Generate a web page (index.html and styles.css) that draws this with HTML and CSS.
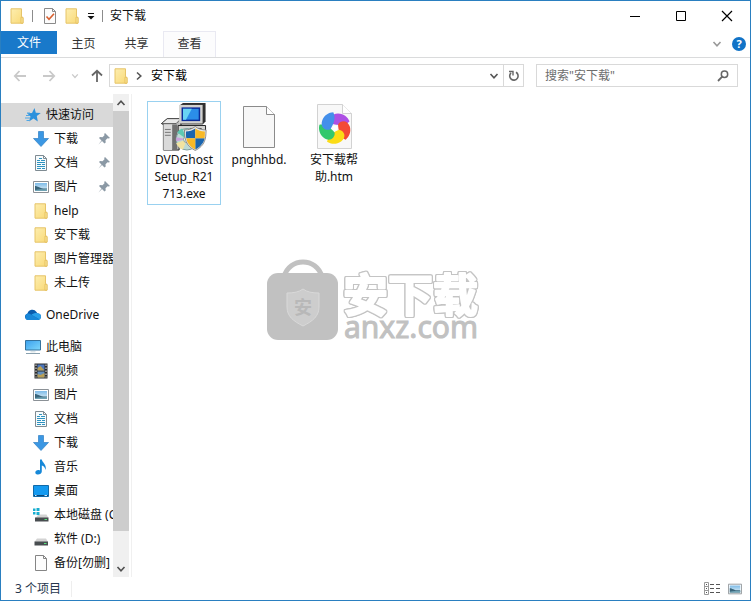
FILE: index.html
```html
<!DOCTYPE html>
<html lang="zh-CN">
<head>
<meta charset="utf-8">
<title>安下载</title>
<link rel="stylesheet" href="styles.css">
</head>
<body>
<svg class="sprite" width="0" height="0" aria-hidden="true">
  <defs>
    <linearGradient id="gFolder" x1="0" y1="0" x2="1" y2="1"><stop offset="0" stop-color="#fdeeb0"/><stop offset="1" stop-color="#f9d976"/></linearGradient>
    <linearGradient id="gScreen" x1="0" y1="0" x2="1" y2="1"><stop offset="0" stop-color="#3aa0ee"/><stop offset="1" stop-color="#7fd8fb"/></linearGradient>
    <linearGradient id="gPhoto" x1="0" y1="0" x2="0" y2="1"><stop offset="0" stop-color="#7dbbe8"/><stop offset="1" stop-color="#e6f2f6"/></linearGradient>
  </defs>
  <symbol id="folder" viewBox="0 0 16 16"><path d="M2 .8h10.500v8l1.500 1v5.400H2z" fill="url(#gFolder)" stroke="#e6c469"/><path d="M12 9.200h2v6h-2z" fill="#fbe69b" stroke="#e3bb55" stroke-width=".8"/></symbol>
  <symbol id="doc" viewBox="0 0 16 16"><path d="M2.500.5h8l3 3v12h-11z" fill="#f6fbfd" stroke="#7f8b92"/><path d="M10.500.5v3h3" fill="none" stroke="#7f8b92"/><path d="M6 3.500h3M4 5.500h3M8 5.500h4M4 7.500h8M4 9.500h4M9 9.500h3M4 11.500h8M4 13.500h4M9 13.500h3" stroke="#2f93c0" stroke-width="1.200"/></symbol>
  <symbol id="photo" viewBox="0 0 16 16"><path d="M.5 2.500h15v11H.5z" fill="#fff" stroke="#8b9196"/><path d="M2 4h12v8H2z" fill="url(#gPhoto)"/><path d="M2 7c3 0 5 3 12 2.500V12H2z" fill="#39657b"/><path d="M2 11c4-1 8-.5 12-1v2H2z" fill="#70a3b4"/></symbol>
  <symbol id="down" viewBox="0 0 16 16"><path d="M5.500.5h5v7h5L8 15.500.5 7.500h5z" fill="#3b97e3" stroke="#2f7fc4" stroke-width=".7"/></symbol>
  <symbol id="star" viewBox="0 0 16 16"><path d="M9.500 1l1.300 4.700 5 .2-4 3.100 1 5.500-4.300-3L4 14.500l1.500-5L2 6.200l5-.3z" fill="#2c91dc"/><path d="M1 8.500h4M0 11h5M1.500 13.500h3M2 6h3" stroke="#4fa6e4"/></symbol>
  <symbol id="pin" viewBox="0 0 12 12"><path d="M7 0l5 5-1.500.5-1-.2-2 2 .2 2.200L6.500 10.500 4 8 .5 11.500 3.500 7.500 1 5l1-1 2.500.3 2-2L6.200 1z" fill="#8b99a5"/></symbol>
  <symbol id="cloud" viewBox="0 0 16 16"><path d="M3 13a3.300 3.300 0 0 1-.5-6.500A5 5 0 0 1 11.500 5l1 1.500a3 3 0 0 1 .5 6.500z" fill="#0a5cae"/><path d="M3 13a3.300 3.300 0 0 1 .2-6.500c1 0 1.800.4 2.800 1l8.500 5c-.5.400-.9.500-1.500.5z" fill="#1887d8"/><path d="M6.500 7.800C9 5.500 15.500 5 16 9.500c0 1-.5 2-1.300 2.900z" fill="#2aa0ea"/></symbol>
  <symbol id="pc" viewBox="0 0 16 16"><path d="M.5 1.500h15v9.500H.5z" fill="url(#gScreen)" stroke="#35729d"/><path d="M5.500 12h5v1.500h-5z" fill="#dbe4e8"/><path d="M1 14.500h14" stroke="#89a0ae"/></symbol>
  <symbol id="video" viewBox="0 0 16 16"><path d="M1.500.5h13v15h-13z" fill="#2c2c2c"/><path d="M4.500 1.500h7v6h-7z" fill="#4b76bd"/><path d="M4.500 8.500h7v6h-7z" fill="#648fbd"/><path d="M4.500 5l3-2 4 4.500h-7zM4.500 11l3 1 4-2v4.500h-7z" fill="#b99f55"/><path d="M3 1.500v13M13 1.500v13" stroke="#eee" stroke-dasharray="1.500 1.500"/></symbol>
  <symbol id="music" viewBox="0 0 16 16"><path d="M7 .5h1.800C9.300 4 14 5 12.500 11 12 8.500 10.800 7 8.800 6.500v6c0 3.700-6.500 4-6.500 1 0-2 2.500-3 4.700-2z" fill="#1688d8"/></symbol>
  <symbol id="desktop" viewBox="0 0 16 16"><path d="M.5 2.500h15v11H.5z" fill="#149af0" stroke="#116aa8"/><path d="M1 12.500h14" stroke="#0a4778"/><path d="M2 12.500h1.500M11.500 12.500H14" stroke="#d0ecff"/></symbol>
  <symbol id="disk" viewBox="0 0 16 16"><path d="M4 7.500h9l2 3.500H1.500z" fill="#d3d3d3"/><path d="M1.500 10.500h13.500v4H1.500z" fill="#484d50"/><path d="M11 12.500h2.500" stroke="#57e47c"/></symbol>
  <symbol id="sysdisk" viewBox="0 0 16 16"><path d="M5.500 7.500h8l2 3.500H2.500z" fill="#d3d3d3"/><path d="M2 10.500h13.500v4H2z" fill="#484d50"/><path d="M11.500 12.500H14" stroke="#57e47c"/><path d="M0 1.500h2.500V4H0zM3.500 1H6.500v3h-3zM0 5h2.500v2.500H0zM3.500 5h3v3h-3z" fill="#19aed0"/></symbol>
  <symbol id="blank" viewBox="0 0 16 16"><path d="M2.500.5h8l3 3v12h-11z" fill="#fdfdfd" stroke="#858585"/><path d="M10.500.5v3h3" fill="none" stroke="#858585"/></symbol>
  <symbol id="check" viewBox="0 0 16 16"><path d="M2.500.5h8l3 3v12h-11z" fill="#fcfcfc" stroke="#8a8a8a"/><path d="M10.500.5v3h3" fill="none" stroke="#8a8a8a"/><path d="M4.500 8.500l2.500 2.700 5-5.500" fill="none" stroke="#d86030" stroke-width="1.600"/></symbol>
  <symbol id="chev" viewBox="0 0 10 10"><path d="M1.500 3L5 6.800 8.500 3" fill="none" stroke="currentColor" stroke-width="1.600"/></symbol>
  <symbol id="arrow" viewBox="0 0 14 14"><path d="M13 7H2M6.500 2L1.800 7l4.700 5" fill="none" stroke="currentColor" stroke-width="1.800"/></symbol>
  <symbol id="petal" viewBox="-20 -20 40 40"><path d="M-2.500-4C-6-8-4-14.500 3-14.500c6 0 10 4 11.500 8C10-2 3-2.500-2.500-4z" fill="currentColor"/></symbol>
</svg>

<div class="window">
  <header class="titlebar">
    <svg class="ic"><use href="#folder"/></svg>
    <span class="sep"></span>
    <button class="plain" aria-label="属性"><svg class="ic"><use href="#check"/></svg></button>
    <button class="plain" aria-label="新建文件夹"><svg class="ic"><use href="#folder"/></svg></button>
    <button class="plain qat" aria-label="自定义快速访问工具栏"><svg width="8" height="8" viewBox="0 0 8 8"><path d="M1 1.500h6" stroke="#111"/><path d="M.5 4h7L4 7.500z" fill="#111"/></svg></button>
    <span class="sep"></span>
    <h1>安下载</h1>
    <div class="controls">
      <button class="plain" aria-label="最小化"><svg width="12" height="12" viewBox="0 0 12 12"><path d="M1 6.500h10" stroke="#000"/></svg></button>
      <button class="plain" aria-label="最大化"><svg width="12" height="12" viewBox="0 0 12 12"><path d="M1.500 1.500h9v9h-9z" fill="none" stroke="#000"/></svg></button>
      <button class="plain" aria-label="关闭"><svg width="12" height="12" viewBox="0 0 12 12"><path d="M1 1l10 10M11 1L1 11" stroke="#000" stroke-width="1.200"/></svg></button>
    </div>
  </header>

  <nav class="tabs">
    <button class="tab file">文件</button>
    <button class="tab">主页</button>
    <button class="tab">共享</button>
    <button class="tab active">查看</button>
    <span class="fill"></span>
    <button class="plain expand" aria-label="展开功能区"><svg width="10" height="10"><use href="#chev"/></svg></button>
    <button class="help" aria-label="帮助">?</button>
  </nav>

  <div class="addressbar">
    <div class="history">
      <button class="plain dim" aria-label="后退"><svg width="14" height="14"><use href="#arrow"/></svg></button>
      <button class="plain dim flip" aria-label="前进"><svg width="14" height="14"><use href="#arrow"/></svg></button>
      <button class="plain dim recent" aria-label="最近位置"><svg width="8" height="8"><use href="#chev"/></svg></button>
      <button class="plain up" aria-label="上移"><svg width="14" height="14"><use href="#arrow"/></svg></button>
    </div>
    <div class="path">
      <svg class="ic"><use href="#folder"/></svg>
      <svg class="crumb" width="10" height="10"><use href="#chev"/></svg>
      <a href="#">安下载</a>
      <button class="plain drop" aria-label="以前的位置"><svg width="10" height="10"><use href="#chev"/></svg></button>
      <button class="plain refresh" aria-label="刷新"><svg width="12" height="12" viewBox="0 0 12 12"><path d="M8 2.300A4.200 4.200 0 1 1 3 2.900" fill="none" stroke="#666" stroke-width="1.600"/><path d="M1 1.500h4v4" fill="none" stroke="#666" stroke-width="1.400"/></svg></button>
    </div>
    <div class="search">
      <input type="text" aria-label="搜索" placeholder='搜索"安下载"'>
      <svg width="12" height="12" viewBox="0 0 12 12"><circle cx="7.500" cy="4.300" r="3.200" fill="none" stroke="#666" stroke-width="1.500"/><path d="M5.200 6.700L1 11" stroke="#666" stroke-width="1.800"/></svg>
    </div>
  </div>

  <div class="body">
    <aside class="nav">
      <div class="tree">
        <ul>
          <li class="root sel"><svg class="ic"><use href="#star"/></svg><span>快速访问</span></li>
          <li><svg class="ic"><use href="#down"/></svg><span>下载</span><svg class="pin"><use href="#pin"/></svg></li>
          <li><svg class="ic"><use href="#doc"/></svg><span>文档</span><svg class="pin"><use href="#pin"/></svg></li>
          <li><svg class="ic"><use href="#photo"/></svg><span>图片</span><svg class="pin"><use href="#pin"/></svg></li>
          <li><svg class="ic"><use href="#folder"/></svg><span>help</span></li>
          <li><svg class="ic"><use href="#folder"/></svg><span>安下载</span></li>
          <li><svg class="ic"><use href="#folder"/></svg><span>图片管理器</span></li>
          <li><svg class="ic"><use href="#folder"/></svg><span>未上传</span></li>
        </ul>
        <ul>
          <li class="root"><svg class="ic"><use href="#cloud"/></svg><span>OneDrive</span></li>
        </ul>
        <ul>
          <li class="root"><svg class="ic"><use href="#pc"/></svg><span>此电脑</span></li>
          <li><svg class="ic"><use href="#video"/></svg><span>视频</span></li>
          <li><svg class="ic"><use href="#photo"/></svg><span>图片</span></li>
          <li><svg class="ic"><use href="#doc"/></svg><span>文档</span></li>
          <li><svg class="ic"><use href="#down"/></svg><span>下载</span></li>
          <li><svg class="ic"><use href="#music"/></svg><span>音乐</span></li>
          <li><svg class="ic"><use href="#desktop"/></svg><span>桌面</span></li>
          <li><svg class="ic"><use href="#sysdisk"/></svg><span>本地磁盘 (C:)</span></li>
          <li><svg class="ic"><use href="#disk"/></svg><span>软件 (D:)</span></li>
          <li><svg class="ic"><use href="#blank"/></svg><span>备份[勿删]</span></li>
        </ul>
      </div>
      <div class="scroll">
        <button class="plain scrollup" aria-label="向上滚动"><svg width="10" height="10"><use href="#chev"/></svg></button>
        <div class="thumb"></div>
        <button class="plain" aria-label="向下滚动"><svg width="10" height="10"><use href="#chev"/></svg></button>
      </div>
    </aside>

    <main class="files">
      <figure class="item chosen">
        <svg width="48" height="49" viewBox="0 -1 48 50">
          <path d="M1 21l6-5h16v4l-4 4v24H3V22z" fill="#b9b9b9" stroke="#222"/>
          <path d="M1 21l6-5h14l-5 5z" fill="#e9e9e9" stroke="#444" stroke-width=".8"/>
          <path d="M3 22h9v26H3z" fill="#dadada"/><path d="M12 22h5v26h-5z" fill="#707070"/>
          <path d="M4.500 27h6M4.500 30h6M4.500 33h6" stroke="#777"/>
          <path d="M20 2l3-2h23v19l-3 3H20z" fill="#303030"/>
          <path d="M19 2h24v19H19z" fill="#d2d2cf"/>
          <path d="M21.500 4.500h19v14h-19z" fill="#0b2c9a"/>
          <path d="M23 6h16v11H23z" fill="#2b8ee8"/><path d="M23 6h9l-6 11h-3z" fill="#69d5f4"/>
          <path d="M18 23h28v7H18z" fill="#d5d5d2" stroke="#222"/><path d="M30 26h12" stroke="#555"/>
          <circle cx="27" cy="37" r="11" fill="#bedbd4" stroke="#7d9c9a"/>
          <path d="M27 37L17 30a12 12 0 0 1 5-4z" fill="#5ec9b2"/><path d="M27 37L16 41a11 11 0 0 0 7 6.500z" fill="#f2e3a0"/><path d="M27 37L16 35v4z" fill="#cba0db"/>
          <circle cx="27" cy="37" r="3.500" fill="#eef6f4" stroke="#86a09e"/>
          <path d="M35.500 24c3 2.500 7 3.500 11 3.500 0 9-1 16-11 21-10-5-11-12-11-21 4 0 8-1 11-3.500z" fill="#e8e8e8" stroke="#777" stroke-width=".8"/>
          <path d="M35.500 26v10h-9.200c-.3-2-.3-4-.3-7 4 0 6.500-1 9.500-3zM35.500 36H45c-1 5-4 8.500-9.500 11.500z" fill="#1b65ae"/>
          <path d="M35.500 26v10H45c.3-2 .3-4 .3-7-4 0-6.800-1-9.800-3zM35.500 36h-9.200c1 5 3.700 8.500 9.200 11.500z" fill="#f8b927"/>
        </svg>
        <figcaption>DVDGhost<br>Setup_R21<br>713.exe</figcaption>
      </figure>
      <figure class="item">
        <svg width="48" height="49" viewBox="0 0 48 49"><path d="M8.500 4.500h23l8 8v33h-31z" fill="#f7f7f7" stroke="#8b8b8b"/><path d="M31.500 4.500v8h8" fill="#fff" stroke="#8b8b8b"/></svg>
        <figcaption>pnghhbd.</figcaption>
      </figure>
      <figure class="item">
        <svg width="48" height="49" viewBox="0 0 48 49">
          <path d="M7.500 2.500h25l9 9v35h-34z" fill="#f8f8f8" stroke="#d2d2d2"/><path d="M32.500 2.500v9h9" fill="#fff" stroke="#d2d2d2"/>
          <g transform="translate(25 26)">
            <use href="#petal" x="-20" y="-20" width="40" height="40" color="#ad50e4"/>
            <use href="#petal" x="-20" y="-20" width="40" height="40" color="#f44a35" transform="rotate(72)"/>
            <use href="#petal" x="-20" y="-20" width="40" height="40" color="#fbdc16" transform="rotate(144)"/>
            <use href="#petal" x="-20" y="-20" width="40" height="40" color="#32c86c" transform="rotate(216)"/>
            <use href="#petal" x="-20" y="-20" width="40" height="40" color="#448fea" transform="rotate(288)"/>
            <circle r="2.500" fill="#fff"/>
          </g>
        </svg>
        <figcaption>安下载帮<br>助.htm</figcaption>
      </figure>
    </main>
  </div>

  <footer class="status">
    <span class="count">3 个项目</span>
    <div class="views">
      <button class="plain" aria-label="详细信息"><svg width="17" height="13" viewBox="0 0 17 13"><path d="M.5.5h4v12h-4zM.5 4.500h4M.5 8.500h4" fill="none" stroke="#999"/><path d="M2 2.500h1M2 6.500h1M2 10.500h1M6 2.500h4M12 2.500h4M6 6.500h4M12 6.500h4M6 10.500h4M12 10.500h4" stroke="#555"/></svg></button>
      <button class="plain" aria-label="大图标"><svg width="14" height="14"><use href="#photo"/></svg></button>
    </div>
  </footer>

  <svg class="watermark" width="216" height="84" viewBox="0 0 216 84">
    <path d="M18 18C23-2 51-2 56 18" fill="none" stroke="#c1c1c1" stroke-width="5"/>
    <rect x="1" y="14" width="71" height="67" rx="11" fill="#c1c1c1"/>
    <path d="M37 30c4 3 9 4 16 4v14c0 9-6 14-16 19-10-5-16-10-16-19V34c7 0 12-1 16-4z" fill="#cdcdcd" stroke="#d9d9d9"/>
    <text class="wm-seal" x="37" y="55" text-anchor="middle">安</text>
    <text class="wm-name" x="77" y="53">安下载</text>
    <text class="wm-url" x="78" y="79">anxz.com</text>
  </svg>
</div>
</body>
</html>
```
FILE: styles.css
```css
* { box-sizing: border-box; }

body {
  margin: 0;
  color: #111;
  background: #fff;
  font: 12px/16px "Noto Sans", "Noto Sans CJK SC", sans-serif;
}

button, input { font: inherit; color: inherit; }

.sprite { position: absolute; }

.plain {
  display: flex;
  align-items: center;
  justify-content: center;
  padding: 0;
  border: 0;
  background: none;
}

.ic { width: 16px; height: 16px; flex: none; }

.window {
  position: relative;
  display: flex;
  flex-direction: column;
  height: 100vh;
  border: 1px solid #2a7fc0;
  background: #fff;
}

/* Title bar */
.titlebar {
  display: flex;
  align-items: center;
  height: 30px;
  padding-left: 8px;
}
.titlebar h1 { margin: 0 0 0 7px; font-size: 12px; font-weight: 400; }
.sep { width: 1px; height: 12px; margin: 0 9px 0 7px; background: #8c8c8c; }
.sep + .plain + .plain { margin-left: 6px; }
.qat { width: 22px; }
.qat + .sep { margin: 0; }
.controls { display: flex; margin-left: auto; }
.controls .plain { width: 46px; height: 29px; }

/* Ribbon tabs */
.tabs {
  display: flex;
  height: 27px;
  border-bottom: 1px solid #dadbdc;
}
.tab {
  width: 53px;
  padding: 0 0 2px;
  border: 1px solid transparent;
  border-bottom: 0;
  background: none;
  color: #333;
}
.tab.file { width: 56px; height: 23px; padding: 0; background: #1979ca; color: #fff; }
.tab.active { background: #fcfcfd; border-color: #e9e9f2; }
.fill { flex: 1; }
.expand { width: 20px; height: 26px; color: #999; }
.help {
  width: 14px;
  height: 14px;
  margin: 6px 4px 0 5px;
  padding: 0;
  border: 0;
  border-radius: 50%;
  background: #1173c7;
  color: #fff;
  font-size: 11px;
  font-weight: 700;
  line-height: 14px;
}

/* Address bar */
.addressbar {
  display: flex;
  align-items: center;
  padding: 6px 12px 7px 0;
}
.history { display: flex; align-items: center; width: 108px; padding-left: 12px; color: #666; }
.history .plain { margin-right: 15px; }
.history .dim { color: #c9c9c9; }
.history .recent { margin: 0 11px 0 0; }
.history .up { margin: 0; }
.flip svg { transform: rotate(180deg); }
.up svg { transform: rotate(90deg); }
.path, .search { display: flex; align-items: center; height: 23px; border: 1px solid #d9d9d9; }
.path { flex: 1; padding-left: 3px; }
.path a { color: #000; text-decoration: none; }
.crumb { margin: 0 7px 0 5px; color: #555; transform: rotate(-90deg); }
.drop { width: 18px; height: 21px; margin-left: auto; color: #555; }
.refresh { width: 20px; height: 21px; border-left: 1px solid #d9d9d9; }
.search { width: 202px; margin-left: 12px; padding: 0 8px; }
.search input { flex: 1; min-width: 0; padding: 0; border: 0; outline: 0; background: none; }
.search input::placeholder { color: #6d6d6d; opacity: 1; }

/* Navigation pane and file area */
.body { display: flex; flex: 1; min-height: 0; }
.nav { display: flex; width: 131px; border-right: 1px solid #f0f0f0; }
.tree { flex: 1; min-width: 0; padding-top: 9px; overflow: hidden; }
.tree ul { margin: 0 0 8px; padding: 0; list-style: none; }
.tree li {
  display: flex;
  align-items: center;
  height: 24px;
  padding-left: 32px;
  gap: 5px;
  white-space: nowrap;
}
.tree .root { padding-left: 24px; }
.tree .sel { background: #d9d9d9; }
.pin { width: 12px; height: 12px; margin: 0 3px 0 auto; }
.scroll { display: flex; flex-direction: column; width: 16px; margin: 0 2px 0 0; background: #f0f0f0; }
.scroll .plain { height: 17px; color: #505050; }
.scrollup svg { transform: rotate(180deg); }
.thumb { height: 420px; margin-bottom: auto; background: #cdcdcd; }

.files { display: flex; flex: 1; align-items: flex-start; flex-wrap: wrap; gap: 1px; padding: 7px 15px; }
.item {
  display: flex;
  flex-direction: column;
  align-items: center;
  width: 74px;
  margin: 0;
  padding-bottom: 2px;
  border: 1px solid transparent;
  line-height: 17px;
  text-align: center;
}
.item.chosen { border-color: #99d1f0; }

/* Status bar */
.status { display: flex; align-items: center; height: 23px; padding: 0 8px 0 14px; color: #26364d; }
.count { padding-right: 10px; border-right: 1px solid #eee; }
.views { display: flex; gap: 7px; margin-left: auto; }

/* Watermark laid over the file area */
.watermark { position: absolute; top: 50%; left: 50%; margin: -42px 0 0 -110px; pointer-events: none; }
.watermark text { font-family: "Noto Sans", "Noto Sans CJK SC", sans-serif; }
.wm-seal { font-size: 18px; font-weight: 700; fill: #b8b8b8; }
.wm-url { font-size: 30px; fill: #c1c1c1; stroke: #c1c1c1; stroke-width: 1px; }
.wm-name {
  font-size: 45px;
  font-weight: 700;
  fill: #fff;
  stroke: #fff;
  stroke-width: 2px;
  stroke-linejoin: round;
  filter: drop-shadow(1px 0 #c4c4c4) drop-shadow(-1px 0 #c4c4c4) drop-shadow(0 1px #c4c4c4) drop-shadow(0 -1px #c4c4c4);
}
```
